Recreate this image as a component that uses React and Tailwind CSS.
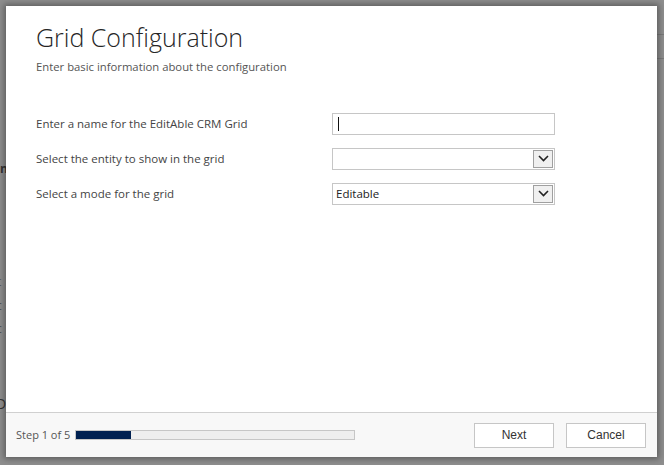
import React from "react";

function Chevron() {
  return (
    <span className="flex h-[18px] w-[20px] items-center justify-center border border-[#a0a0a0] bg-[#f0f0f0]">
      <svg width="11" height="7" viewBox="0 0 11 7">
        <path d="M1 1 L5.5 5.5 L10 1" fill="none" stroke="#222" strokeWidth="1.6" />
      </svg>
    </span>
  );
}

function Row({ label, children }) {
  return (
    <div className="flex h-[22px] items-center">
      <div className="w-[296px] text-[11.5px] text-[#444]">{label}</div>
      {children}
    </div>
  );
}

export default function App() {
  return (
    <div
      className="relative h-[465px] w-[664px] overflow-hidden bg-[#8e8e8e]"
      style={{ fontFamily: '"Open Sans", "Noto Sans", sans-serif' }}
    >
      {/* dimmed page behind */}
      <div className="absolute left-0 top-[160px] text-[12px] font-bold text-[#333]">n</div>
      <div className="absolute left-[-3px] top-[273px] text-[12px] text-[#555]">t</div>
      <div className="absolute left-[-4px] top-[297px] text-[12px] text-[#555]">c</div>
      <div className="absolute left-[-4px] top-[320px] text-[12px] text-[#555]">c</div>
      <div className="absolute left-[-4px] top-[393px] text-[14px] text-[#333]">D</div>
      <div className="absolute right-0 top-[34px] h-px w-[8px] bg-[#7a7a7a]" />
      <div className="absolute right-0 top-[58px] h-px w-[8px] bg-[#7a7a7a]" />

      {/* dialog */}
      <div className="absolute left-[6px] top-[6px] flex h-[451px] w-[651px] flex-col bg-white shadow-[0_0_6px_2px_rgba(0,0,0,0.35)]">
        <div className="flex-1 pl-[30px] pt-[15px]">
          <div className="text-[25px] font-light leading-[32px] text-[#262626]">Grid Configuration</div>
          <div className="mt-[6px] text-[11.3px] text-[#555]">Enter basic information about the configuration</div>
          <div className="mt-[37px] flex flex-col gap-[13px]">
            <Row label="Enter a name for the EditAble CRM Grid">
              <div className="flex h-[22px] w-[223px] items-center border border-[#c6c6c6] bg-white pl-[5px]">
                <div className="h-[14px] w-px bg-[#111]" />
              </div>
            </Row>
            <Row label="Select the entity to show in the grid">
              <div className="flex h-[22px] w-[223px] items-center justify-end border border-[#c6c6c6] bg-white pr-[1px]">
                <Chevron />
              </div>
            </Row>
            <Row label="Select a mode for the grid">
              <div className="flex h-[22px] w-[223px] items-center justify-between border border-[#c6c6c6] bg-white pl-[3px] pr-[1px]">
                <span className="text-[11.5px] text-[#222]">Editable</span>
                <Chevron />
              </div>
            </Row>
          </div>
        </div>
        <div className="flex h-[45px] items-center border-t border-[#d0d0d0] bg-[#f8f8f8] pl-[10px] pr-[11px]">
          <span className="text-[11px] text-[#555]">Step 1 of 5</span>
          <div className="ml-[5px] h-[10px] w-[280px] border border-[#c6c6c6] bg-[#eeeeee]">
            <div className="h-full w-[55px] bg-[#002050]" />
          </div>
          <div className="ml-auto flex gap-[12px]">
            <button className="h-[25px] w-[80px] border border-[#c6c6c6] bg-white text-[12px] text-[#333]" style={{ fontFamily: '"Liberation Sans", Arial, sans-serif' }}>Next</button>
            <button className="h-[25px] w-[80px] border border-[#c6c6c6] bg-white text-[12px] text-[#333]" style={{ fontFamily: '"Liberation Sans", Arial, sans-serif' }}>Cancel</button>
          </div>
        </div>
      </div>
    </div>
  );
}
